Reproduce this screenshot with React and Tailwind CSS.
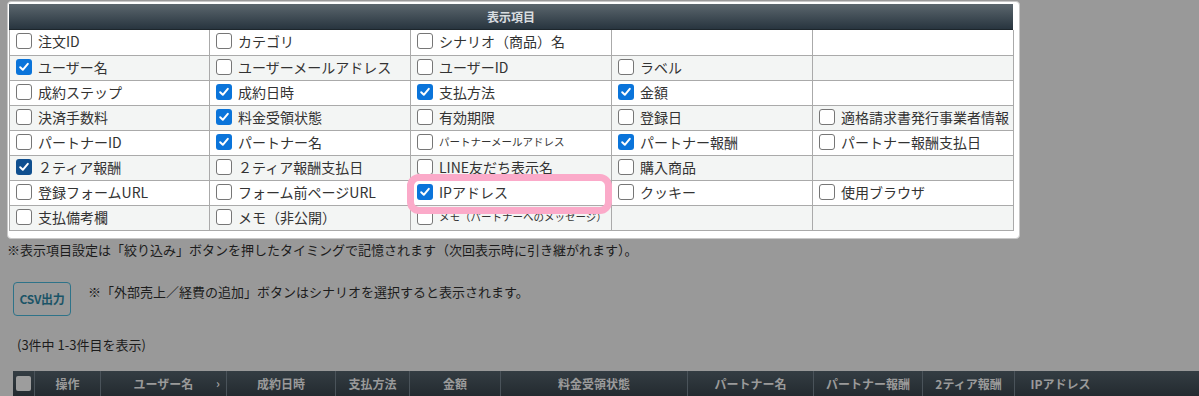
import React from 'react';

const FONT = { fontFamily: '"Noto Sans CJK JP", "Noto Sans", sans-serif' };

// 表示項目の設定（c: チェック済み, s: 小さい文字, d: 濃い色のチェック）
const ROWS = [
  [{ t: '注文ID' }, { t: 'カテゴリ' }, { t: 'シナリオ（商品）名' }, null, null],
  [{ t: 'ユーザー名', c: true }, { t: 'ユーザーメールアドレス' }, { t: 'ユーザーID' }, { t: 'ラベル' }, null],
  [{ t: '成約ステップ' }, { t: '成約日時', c: true }, { t: '支払方法', c: true }, { t: '金額', c: true }, null],
  [{ t: '決済手数料' }, { t: '料金受領状態', c: true }, { t: '有効期限' }, { t: '登録日' }, { t: '適格請求書発行事業者情報' }],
  [{ t: 'パートナーID' }, { t: 'パートナー名', c: true }, { t: 'パートナーメールアドレス', s: true }, { t: 'パートナー報酬', c: true }, { t: 'パートナー報酬支払日' }],
  [{ t: '２ティア報酬', c: true, d: true }, { t: '２ティア報酬支払日' }, { t: 'LINE友だち表示名' }, { t: '購入商品' }, null],
  [{ t: '登録フォームURL' }, { t: 'フォーム前ページURL' }, { t: 'IPアドレス', c: true }, { t: 'クッキー' }, { t: '使用ブラウザ' }],
  [{ t: '支払備考欄' }, { t: 'メモ（非公開）' }, { t: 'メモ（パートナーへのメッセージ）', s: true }, null, null],
];

const COLS = [
  { t: '', w: 21 },
  { t: '操作', w: 66 },
  { t: 'ユーザー名', w: 126, arrow: true },
  { t: '成約日時', w: 109 },
  { t: '支払方法', w: 74 },
  { t: '金額', w: 91 },
  { t: '料金受領状態', w: 187 },
  { t: 'パートナー名', w: 126 },
  { t: 'パートナー報酬', w: 109 },
  { t: '2ティア報酬', w: 92 },
  { t: 'IPアドレス', w: 92 },
];

function Check({ checked, dark }) {
  if (!checked) {
    return <span className="w-4 h-4 shrink-0 rounded-[3px] border border-[#767676] bg-white" />;
  }
  return (
    <span className={`w-4 h-4 shrink-0 rounded-[3px] flex items-center justify-center ${dark ? 'bg-[#0f4f8f]' : 'bg-[#0a74da]'}`}>
      <svg width="12" height="12" viewBox="0 0 12 12">
        <path d="M2.2 6.3 L4.8 8.8 L9.8 2.8" fill="none" stroke="white" strokeWidth="2" strokeLinecap="round" strokeLinejoin="round" />
      </svg>
    </span>
  );
}

export default function App() {
  return (
    <div className="w-[1199px] h-[396px] overflow-hidden bg-[#999999]" style={FONT}>
      {/* 表示項目パネル */}
      <div className="relative ml-[7px] mt-[1px] w-[1013px] bg-white border border-[#c8c8c8] rounded-[4px] pl-[1px] pr-[6px] pt-[2px] pb-[7px]">
        <div className="h-[26px] flex items-center justify-center bg-gradient-to-b from-[#5c676e] to-[#28353f] border-b border-[#1d262c] text-[12px] font-bold text-[#d9dde0]">
          表示項目
        </div>
        <table className="table-fixed border-collapse w-[1004px] text-[#333]">
          <colgroup>
            <col className="w-[200px]" />
            <col className="w-[201px]" />
            <col className="w-[201px]" />
            <col className="w-[201px]" />
            <col className="w-[201px]" />
          </colgroup>
          <tbody>
            {ROWS.map((row, ri) => (
              <tr key={ri} className={ri % 2 === 1 ? 'bg-[#f3f5f4]' : 'bg-white'}>
                {row.map((cell, ci) => (
                  <td key={ci} className="h-[25px] p-0 border border-[#aaaaaa] border-t-0 align-middle">
                    {cell && (
                      <div className="flex items-center gap-[6px] pl-[6px] h-[24px] -mt-[2px] whitespace-nowrap overflow-hidden">
                        <Check checked={cell.c} dark={cell.d} />
                        <span className={cell.s ? 'text-[10.5px] leading-[16px]' : 'text-[14px] leading-[18px]'}>{cell.t}</span>
                      </div>
                    )}
                  </td>
                ))}
              </tr>
            ))}
          </tbody>
        </table>
        {/* 強調の枠 */}
        <div className="absolute left-[399px] top-[172px] w-[205px] h-[40px] border-[7px] border-[#fbaac9] rounded-[12px]" />
      </div>

      <p className="ml-[7px] mt-[1px] text-[13px] leading-[20px] text-[#1c1c1c]">
        ※表示項目設定は「絞り込み」ボタンを押したタイミングで記憶されます（次回表示時に引き継がれます）。
      </p>

      <div className="flex items-start ml-[13px] mt-[22px]">
        <button className="w-[58px] h-[34px] rounded-[4px] border border-[#2e7389] text-[12px] font-bold text-[#1b5467] tracking-tight">
          CSV出力
        </button>
        <span className="ml-[17px] mt-[1px] text-[13px] leading-[18px] text-[#1c1c1c]">
          ※「外部売上／経費の追加」ボタンはシナリオを選択すると表示されます。
        </span>
      </div>

      <p className="ml-[17px] mt-[19px] text-[13px] leading-[20px] text-[#1c1c1c]">(3件中 1-3件目を表示)</p>

      <div className="flex ml-[13px] mt-[16px] h-[30px] bg-gradient-to-b from-[#343d43] to-[#20272c]">
        {COLS.map((col, i) => (
          <div
            key={i}
            style={{ width: col.w }}
            className="relative h-full shrink-0 flex items-start justify-center pt-[4px] border-l border-[#4a535a] first:border-l-0 text-[12px] font-bold text-[#9a9a9a]"
          >
            {i === 0 ? (
              <span className="mt-[1px] w-[15px] h-[15px] bg-[#9d9d9d] rounded-[2px]" />
            ) : (
              col.t
            )}
            {col.arrow && <span className="absolute right-[6px] top-[3px] text-[#a0a0a0]">›</span>}
          </div>
        ))}
      </div>
    </div>
  );
}
